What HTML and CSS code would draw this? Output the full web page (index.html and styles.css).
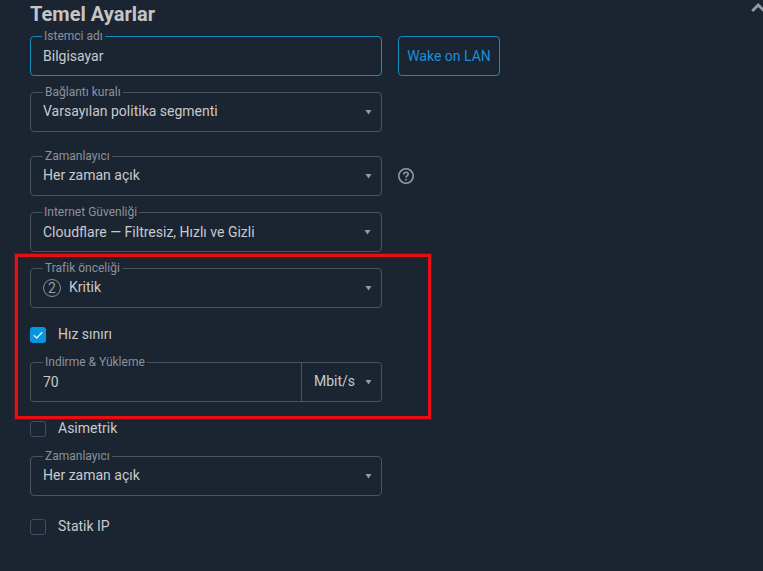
FILE: index.html
```html
<!DOCTYPE html>
<html lang="tr">
<head>
<meta charset="utf-8">
<title>Temel Ayarlar</title>
<link rel="stylesheet" href="styles.css">
</head>
<body>
<main class="panel">
  <header class="panel-head">
    <h1 class="title">Temel Ayarlar</h1>
    <svg class="collapse" width="16" height="14" viewBox="0 0 16 14"><path d="M2.2 11 8.2 5 14.2 11"/></svg>
  </header>
  <form class="form">
    <div class="row">
      <div class="field field-active"><span class="label label-cap">Istemci adı</span><span class="value">Bilgisayar</span></div>
      <button class="wake" type="button">Wake on LAN</button>
    </div>
    <div class="row row-wide">
      <div class="field"><span class="label">Bağlantı kuralı</span><span class="value value-select">Varsayılan politika segmenti</span><span class="arrow"></span></div>
    </div>
    <div class="row">
      <div class="field"><span class="label">Zamanlayıcı</span><span class="value value-select">Her zaman açık</span><span class="arrow"></span></div>
      <svg class="help" width="16" height="16" viewBox="0 0 16 16"><circle cx="8" cy="8" r="7.2"/><path d="M5.8 6.4c0-1.3 1-2.1 2.2-2.1s2.2.8 2.2 2c0 1.5-2.2 1.6-2.2 3.2"/><path d="M8 10.8v1.6"/></svg>
    </div>
    <div class="row">
      <div class="field"><span class="label label-cap">Internet Güvenliği</span><span class="value">Cloudflare — Filtresiz, Hızlı ve Gizli</span><span class="arrow arrow-left"></span></div>
    </div>
    <section class="group">
      <div class="field"><span class="label">Trafik önceliği</span><span class="priority">2</span><span class="value value-select">Kritik</span><span class="arrow"></span></div>
      <label class="check check-first"><span class="box box-on"><svg width="16" height="16" viewBox="0 0 16 16"><path d="M3.7 8.2 6.8 11.1 12.3 5.2"/></svg></span><span class="check-text">Hız sınırı</span></label>
      <div class="field"><span class="label">Indirme &amp; Yükleme</span><span class="value">70</span>
        <div class="unit"><span class="value value-select">Mbit/s</span><span class="arrow"></span></div>
      </div>
      <div class="highlight"></div>
    </section>
    <label class="check check-second"><span class="box"></span><span class="check-text">Asimetrik</span></label>
    <div class="field"><span class="label">Zamanlayıcı</span><span class="value value-select">Her zaman açık</span><span class="arrow"></span></div>
    <label class="check check-third"><span class="box"></span><span class="check-text">Statik IP</span></label>
  </form>
</main>
</body>
</html>
```

FILE: styles.css
```css
* { box-sizing: border-box; }

body {
  margin: 0;
  height: 571px;
  overflow: hidden;
  background: #1b2431;
  color: #c8cacc;
  font: 14px/20px Roboto, "Liberation Sans", sans-serif;
}

.panel { padding-left: 30px; }

.panel-head {
  display: flex;
  justify-content: space-between;
  height: 36px;
  overflow: hidden;
}

.title {
  margin: 2px 0 0;
  font-size: 20px;
  line-height: 24px;
  font-weight: 700;
  letter-spacing: 0.02px;
  color: #c4c5c7;
}

.collapse {
  flex: none;
  margin-right: -3px;
  fill: none;
  stroke: #949ba4;
  stroke-width: 2.8;
}

.form { width: 352px; }

.row {
  display: flex;
  align-items: center;
  gap: 16px;
  width: 480px;
  margin-bottom: 16px;
}

.row-wide { margin-bottom: 24px; }

.field {
  position: relative;
  display: flex;
  align-items: center;
  width: 352px;
  height: 40px;
  padding: 0 9px 0 12px;
  border: 1px solid #4b535f;
  border-radius: 4px;
}

.field-active { border-color: #168fbe; }

.label {
  position: absolute;
  left: 12px;
  top: -9px;
  padding: 0 2px;
  background: #1b2431;
  color: #8b929b;
  font-size: 12px;
  line-height: 16px;
  white-space: nowrap;
}

.label-cap { left: 11px; }

.value { white-space: nowrap; }

.value-select { padding-bottom: 2px; }

.arrow {
  width: 7px;
  height: 5px;
  margin-left: auto;
  background: #949ba4;
  clip-path: polygon(3% 0, 97% 0, 50% 100%);
}

.arrow-left { margin-right: 1px; }

.wake {
  width: 102px;
  height: 40px;
  padding: 0;
  border: 1px solid #168fbe;
  border-radius: 4px;
  background: none;
  color: #1b8fd8;
  font: inherit;
}

.help {
  fill: none;
  stroke: #949ba4;
  stroke-width: 1.6;
}

.group { position: relative; }

.priority {
  width: 18px;
  height: 18px;
  margin-right: 8px;
  border: 1px solid #8b929b;
  border-radius: 50%;
  color: #949ba4;
  text-align: center;
  line-height: 17px;
}

.check {
  display: flex;
  align-items: center;
  gap: 12px;
  height: 16px;
}

.check-first { margin: 19px 0; }
.check-second { margin: 19px 0; }
.check-third { margin-top: 23px; }

.check-text { padding-bottom: 2px; }

.box {
  width: 16px;
  height: 16px;
  border: 1px solid #414c66;
  border-radius: 3px;
}

.box-on {
  display: flex;
  border: 0;
  background: #0795df;
}

.box-on svg {
  fill: none;
  stroke: #d9effa;
  stroke-width: 1.4;
}

.unit {
  display: flex;
  align-items: center;
  width: 80px;
  height: 38px;
  margin: 0 -9px 0 auto;
  padding: 0 9px 0 12px;
  border-left: 1px solid #4b535f;
}

.highlight {
  position: absolute;
  left: -15px;
  top: -14px;
  width: 416px;
  height: 165px;
  border: 3px solid #ea0e12;
  box-shadow: 0 0 0 1px rgba(140, 20, 28, 0.6);
  pointer-events: none;
}
```
